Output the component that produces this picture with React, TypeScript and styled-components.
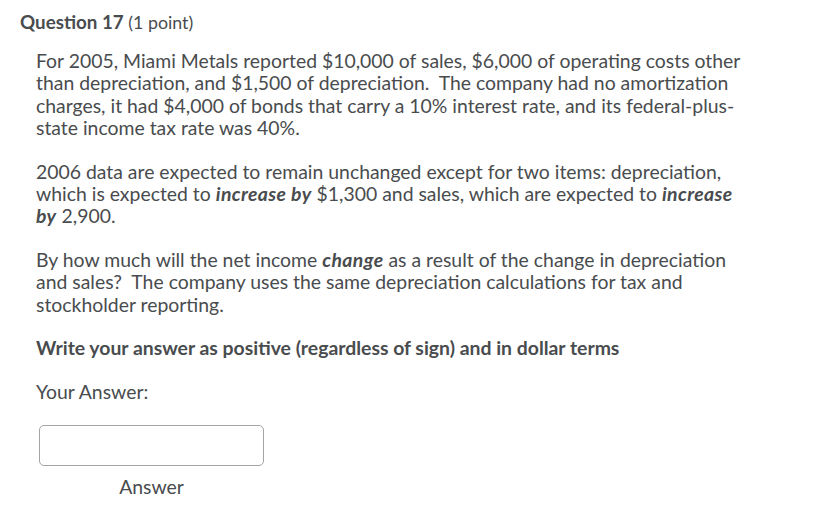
import React from 'react'
import styled, { createGlobalStyle } from 'styled-components'

const GlobalStyle = createGlobalStyle`
  html, body {
    margin: 0;
    padding: 0;
    background: #ffffff;
  }
  body {
    font-family: Lato, 'Noto Sans', sans-serif;
    color: #494c4e;
  }
`

const Page = styled.div`
  padding: 10px 20px 0 20px;
`

const Title = styled.h2`
  margin: 0;
  font-size: 18.8px;
  line-height: 24px;
  font-weight: 700;
  color: #494c4e;

  span {
    font-weight: 400;
    font-size: 17.8px;
  }
`

const Body = styled.div`
  padding: 16px 0 0 16px;
  font-size: 19.4px;
  line-height: 22.3px;
`

const Para = styled.p`
  margin: 0 0 21.5px 0;
  white-space: nowrap;

  em {
    font-style: italic;
    font-weight: 700;
    letter-spacing: 0.4px;
  }
`

const Strong = styled.p`
  margin: 0 0 21px 0;
  font-weight: 700;
  white-space: nowrap;
`

const AnswerField = styled.div`
  display: flex;
  flex-direction: column;
  align-items: center;
  width: 225px;
  margin: 11px 0 0 3px;
  gap: 10px;
`

const Input = styled.input`
  box-sizing: border-box;
  width: 225px;
  height: 41px;
  border: 1px solid #a2a4a6;
  border-radius: 5px;
  background: #fff;
  outline: none;
`

const Label = styled.label`
  font-size: 19.4px;
  line-height: 22px;
`

export default function App() {
  return (
    <>
      <GlobalStyle />
      <Page>
        <Title>
          Question 17 <span>(1 point)</span>
        </Title>
        <Body>
          <Para>
            For 2005, Miami Metals reported $10,000 of sales, $6,000 of operating costs other
            <br />
            than depreciation, and $1,500 of depreciation.&nbsp; The company had no amortization
            <br />
            charges, it had $4,000 of bonds that carry a 10% interest rate, and its federal-plus-
            <br />
            state income tax rate was 40%.
          </Para>
          <Para>
            2006 data are expected to remain unchanged except for two items: depreciation,
            <br />
            which is expected to <em>increase by</em> $1,300 and sales, which are expected to{' '}
            <em>increase</em>
            <br />
            <em>by</em> 2,900.
          </Para>
          <Para>
            By how much will the net income <em>change</em> as a result of the change in depreciation
            <br />
            and sales?&nbsp; The company uses the same depreciation calculations for tax and
            <br />
            stockholder reporting.
          </Para>
          <Strong>Write your answer as positive (regardless of sign) and in dollar terms</Strong>
          <Para>Your Answer:</Para>
          <AnswerField>
            <Input aria-label="Answer" />
            <Label>Answer</Label>
          </AnswerField>
        </Body>
      </Page>
    </>
  )
}
